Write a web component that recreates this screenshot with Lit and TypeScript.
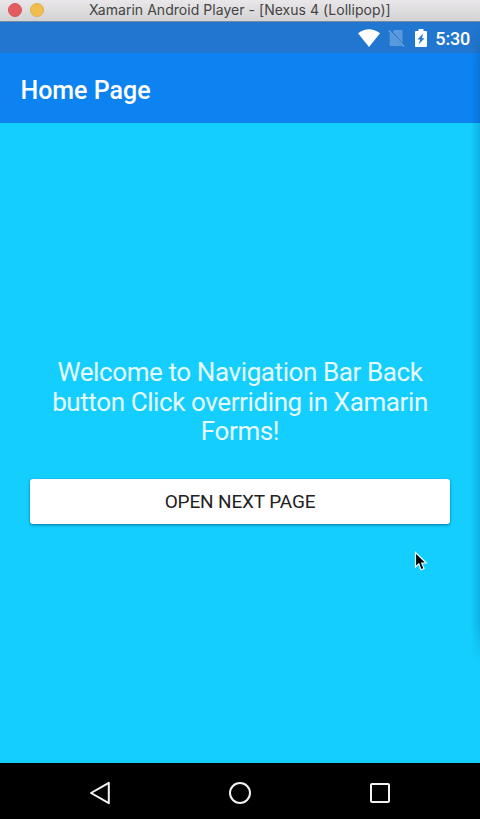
import { LitElement, html, css } from "lit";
import { customElement } from "lit/decorators.js";

@customElement("app-root")
export class AppRoot extends LitElement {
  static styles = css`
    :host {
      display: flex;
      flex-direction: column;
      position: relative;
      width: 480px;
      height: 819px;
      overflow: hidden;
      background: #13cefe;
      color: #fff;
      font-family: Roboto, "Liberation Sans", sans-serif;
    }
    svg { display: block; flex: none; }
    .window-bar {
      flex: none;
      display: flex;
      align-items: center;
      gap: 8px;
      height: 22px;
      box-sizing: border-box;
      padding: 0 9px 1px 8px;
      background: linear-gradient(#e9e7e9, #d4d3d4);
      border-bottom: 1px solid #75899f;
    }
    .dot { width: 14px; height: 14px; border-radius: 50%; flex: none; box-sizing: border-box; }
    .close { background: #e35c60; border: 1px solid #d4555b; }
    .minimize { background: #f0bd4f; border: 1px solid #dfb04e; }
    .window-title {
      margin-left: 37px;
      font-family: Inter, "Liberation Sans", sans-serif;
      font-size: 14px;
      letter-spacing: 0.04px;
      line-height: 20px;
      white-space: nowrap;
      color: #444;
    }
    .status {
      flex: none;
      display: flex;
      align-items: center;
      justify-content: flex-end;
      height: 31px;
      box-sizing: border-box;
      padding-right: 10px;
      background: #2176cf;
    }
    .time { font-size: 18px; font-weight: 500; letter-spacing: -0.2px; line-height: 31px; padding-top: 1px; margin-left: 8px; }
    .no-sim { margin-left: 8px; }
    .battery { margin-left: 10px; }
    .app-bar {
      flex: none;
      height: 70px;
      box-sizing: border-box;
      padding: 2px 20px 0 20.4px;
      background: #0d83f2;
      font-size: 25px;
      font-weight: 500;
      line-height: 71px;
    }
    .content {
      flex: 1;
      display: flex;
      flex-direction: column;
      justify-content: center;
      gap: 32px;
      padding: 0 30px 6px;
    }
    .welcome {
      margin: 0;
      padding-top: 2px;
      font-size: 26px;
      letter-spacing: -0.4px;
      line-height: 29.5px;
      text-align: center;
      color: #e6faff;
    }
    .welcome span { display: block; white-space: nowrap; }
    .next {
      height: 45px;
      border: 0;
      border-radius: 3px;
      background: #fff;
      box-shadow: 0 1px 3px rgba(0, 60, 90, 0.6);
      color: #222;
      font: 400 19px/44px Roboto, "Liberation Sans", sans-serif;
      letter-spacing: -0.15px;
      padding: 1px 0 0;
    }
    .nav {
      flex: none;
      display: flex;
      align-items: center;
      justify-content: center;
      gap: 112px;
      height: 56px;
      box-sizing: border-box;
      padding-top: 4px;
      background: #000;
    }
    .pointer { position: absolute; left: 414px; top: 551px; }
    .edge {
      position: absolute;
      right: 0;
      top: 22px;
      width: 9px;
      height: 640px;
      background: linear-gradient(90deg, rgba(0, 60, 110, 0), rgba(0, 60, 110, 0.2));
      mask-image: linear-gradient(transparent, #000 40px, #000 600px, transparent);
    }
  `;

  render() {
    return html`
      <header class="window-bar">
        <span class="dot close"></span>
        <span class="dot minimize"></span>
        <span class="window-title">Xamarin Android Player - [Nexus 4 (Lollipop)]</span>
      </header>
      <div class="status">
        <svg width="22" height="18" viewBox="0 0 22 18"><path d="M0 4.2Q11-3.6 22 4.2L11 18Z" fill="#fff" /></svg>
        <svg class="no-sim" width="17" height="18" viewBox="0 0 17 18">
          <path d="M6 1H14.5V14L4.8 3Z M1.7 3.5L14 17H2.7Q1.7 17 1.7 16Z" fill="#5a99dc" />
          <path d="M.8 1.5L16 17.5" stroke="#6fa6e0" stroke-width="1.3" />
        </svg>
        <svg class="battery" width="12" height="18" viewBox="0 0 12 18">
          <path d="M3.5 0H8.5V2H11Q12 2 12 3V17Q12 18 11 18H1Q0 18 0 17V3Q0 2 1 2H3.5Z" fill="#fff" />
          <path d="M8.2 4.5L2.5 10.6H5.4L3.4 15.6L9.6 9.2H6.8Z" fill="#2176cf" />
        </svg>
        <span class="time">5:30</span>
      </div>
      <div class="app-bar">Home Page</div>
      <main class="content">
        <p class="welcome">
          <span>Welcome to Navigation Bar Back</span>
          <span>button Click overriding in Xamarin</span>
          <span>Forms!</span>
        </p>
        <button class="next">OPEN NEXT PAGE</button>
      </main>
      <nav class="nav">
        <svg width="28" height="28" viewBox="0 0 28 28"><path d="M5 14L22.8 3.8V24.2Z" fill="none" stroke="#f2f2f2" stroke-width="2" stroke-linejoin="round" /></svg>
        <svg width="28" height="28" viewBox="0 0 28 28"><circle cx="14" cy="14" r="10" fill="none" stroke="#f2f2f2" stroke-width="2" /></svg>
        <svg width="28" height="28" viewBox="0 0 28 28"><rect x="5" y="5" width="18" height="18" rx="1" fill="none" stroke="#f2f2f2" stroke-width="2" /></svg>
      </nav>
      <div class="edge"></div>
      <svg class="pointer" width="14" height="21" viewBox="0 0 14 21">
        <path d="M1.5 1.5V16L4.8 12.8L7 18.8L10 17.6L7.7 12H12.2Z" fill="#000" stroke="#e8faff" stroke-width="1.2" />
      </svg>
    `;
  }
}
